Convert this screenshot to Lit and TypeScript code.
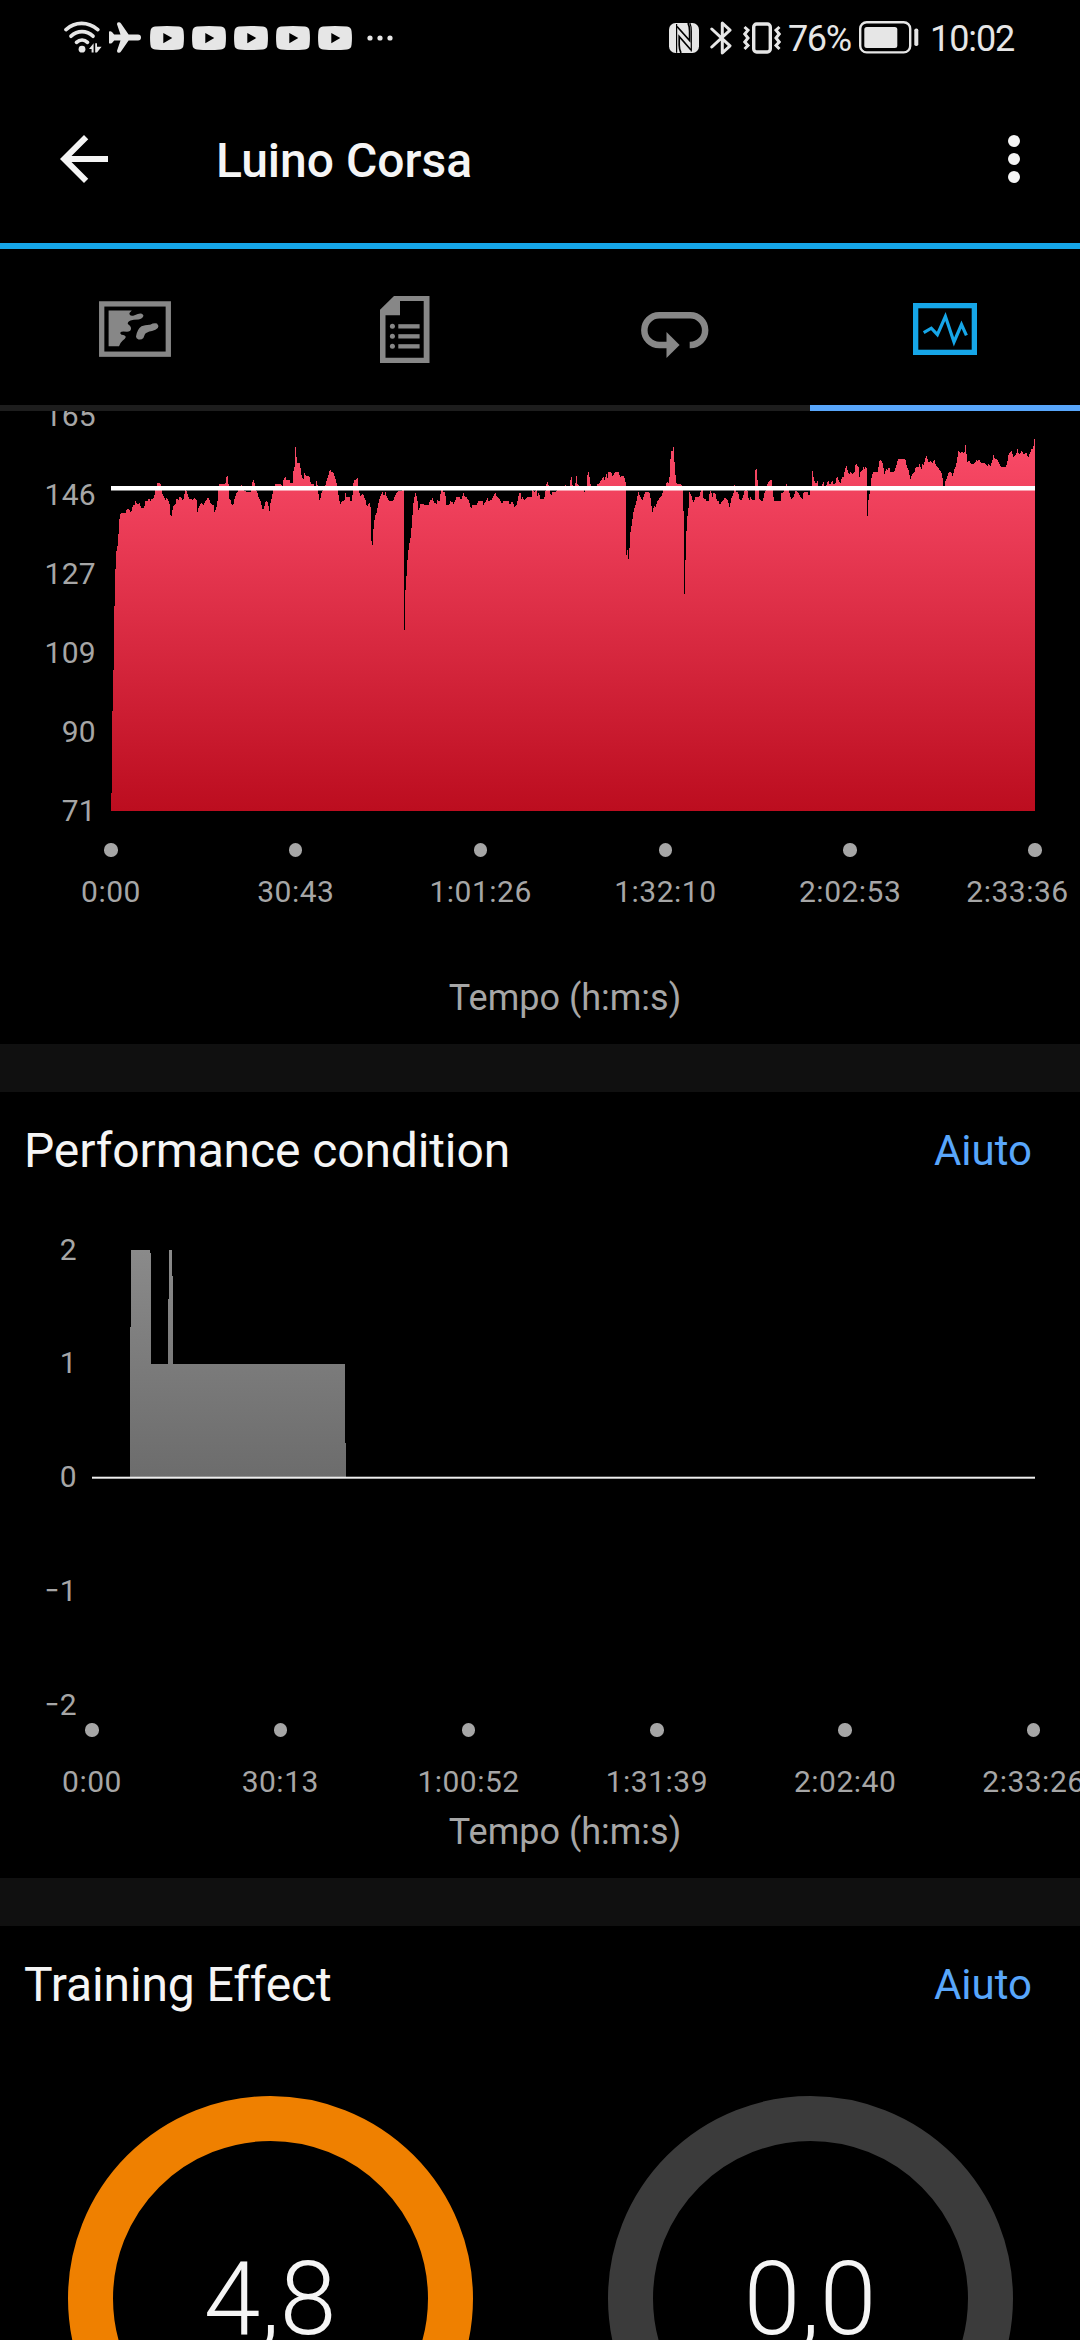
import { LitElement, html, svg, css } from "lit";
import { customElement, property } from "lit/decorators.js";

type Point = [number, number];

/* Heart-rate trace, in thirds of a pixel below the plot's upper reference.
   Each segment carries its own horizontal offset. */
const TRACE: { offset: number; points: string }[] = [
  {
    offset: 0,
    points: `333,1233 333,1180 336,1180 336,935 339,930 341,778 343,640 346,520 349,455 352,445 355,410 358,360 362,340 378,338 380,327 387,327
    391,338 395,333 399,315 404,314 406,303 410,310 414,314 418,308 424,325 432,325 436,303 444,302 447,291 451,303 455,295
    459,298 463,290 466,266 470,262 472,249 481,250 485,262 488,285 494,294 498,302 500,291 506,303 510,315 511,345 515,350
    519,320 526,314 530,294 536,302 538,291 544,292 548,300 552,294 556,264 562,280 568,298 574,296 578,302 583,294 590,302
    592,338 597,320 603,308 610,315 618,302 624,291 630,302 633,313 641,315 643,338 650,320 653,300 656,252 676,252 679,230
    683,228 686,255 688,295 692,302 695,315 700,313 705,292 709,280 714,275 716,268 722,262 724,252 728,270 740,275 752,275
    756,262 758,240 762,242 766,264 772,278 776,292 782,303 787,327 792,325 797,303 803,305 806,320 808,338 811,312 816,290
    822,264 825,252 840,252 848,258 850,240 856,228 860,240 870,240 872,250 878,250 881,205 884,200 885,140 888,140 889,168 892,188
    899,190 902,208 905,228 910,240 914,216 918,228 930,230 932,250 940,252 946,262 950,240 954,262 957,302 961,296 965,278
    970,266 976,258 980,240 986,225 990,204 994,216 1000,217 1004,228 1010,250 1014,275 1018,302 1021,314 1026,304 1034,300
    1036,278 1040,292 1050,292 1053,312 1057,292 1060,250 1064,240 1070,238 1072,230 1076,262 1080,290 1088,280 1093,292
    1098,304 1100,320 1104,315 1110,306 1112,325 1114,420 1116,435 1119,435 1119,405 1122,370 1126,345 1130,338 1134,315 1140,292
    1148,276 1152,290 1156,275 1160,290 1166,302 1180,302 1184,290 1190,278 1198,272 1204,275 1210,268 1212,270`,
  },
  {
    offset: 1200,
    points: `12,690 15,690 15,585 18,555 21,500 24,460 28,432 32,410 35,380 38,340 41,305 46,278 50,290 53,304 55,332 58,328 61,312
    70,310 73,315 87,315 90,298 93,302 97,294 103,308 110,312 112,298 118,308 121,285 124,266 130,275 136,276 138,315 148,315
    151,302 154,308 157,303 160,314 167,298 170,290 180,291 183,302 187,290 190,276 194,290 200,292 206,302 210,315 214,327
    218,315 230,314 236,303 248,304 250,315 256,306 262,294 266,303 274,300 280,290 286,276 290,290 296,294 302,304 306,312
    311,302 326,304 330,315 336,304 340,312 344,322 350,314 355,290 358,278 362,280 364,300 367,291 374,302 380,292 396,290
    397,266 402,275 406,275 410,270 413,290 416,278 422,298 429,298 434,290 437,270 439,255 442,243 447,258 449,275 454,288
    456,276 468,275 474,266 486,268 492,262 495,252 500,264 510,262 512,232 516,230 517,252 520,264 526,258 528,228 531,228 531,252
    540,258 546,264 554,276 560,264 562,228 564,216 567,216 568,228 571,252 576,264 588,262 591,252 598,250 604,240 610,228 614,240
    620,220 622,238 625,216 634,217 637,228 642,222 646,216 655,216 660,230 672,228 676,240 678,260 678,464 681,464 681,450
    684,452 684,476 687,476 687,444 689,444 691,400 695,375 699,345 703,324 708,310 712,290 715,276 720,290 728,300 732,285 736,276 748,277
    751,290 754,315 757,338 762,318 767,322 772,305 778,295 784,290 790,270 797,262 801,240 804,250 808,245 810,190 814,152
    817,158 819,140 822,140 823,178 827,230 830,252 842,252 846,258 848,258 850,330 852,345 852,582 855,582 855,480 858,480 859,400 862,352
    866,322 868,276 874,285 878,303 881,308 886,291 898,291 904,268 908,262 911,300 916,296 919,302 926,303 930,272 934,278
    937,292 941,276 946,280 950,300 956,304 960,315 966,304 976,292 984,302 989,322 994,295 1000,285 1003,252 1008,275
    1014,276 1020,302 1026,300 1032,280 1037,262 1042,270 1047,305 1052,291 1058,302 1064,300 1065,225 1067,207 1070,207 1072,235
    1076,270`,
  },
  {
    offset: 2160,
    points: `118,298 123,303 129,302 133,280 139,270 142,252 148,243 155,240 158,270 162,302 182,303 184,280 190,276 195,262
    199,252 204,264 210,285 214,299 222,288 228,270 236,280 240,290 248,298 251,276 262,276 268,290 271,262 275,260 276,213 279,213
    280,230 285,248 289,252 292,242 296,260 304,262 310,243 314,260 320,255 325,240 330,255 337,240 341,252 346,250 351,228
    356,240 361,252 366,230 370,235 374,215 379,195 382,210 387,224 392,216 396,222 404,215 406,195 409,192 416,203 418,236
    421,216 428,210 431,200 434,210 437,198 440,206 441,262 441,348 444,348 444,300 446,300 449,280 452,260 454,235 458,220 462,215
    474,216 476,195 480,178 486,184 490,200 493,224 499,208 503,212 507,200 512,216 522,216 528,200 534,178 556,178 560,196
    566,212 571,240 576,225 584,214 587,202 596,200 599,192 604,208 608,190 611,196 616,176 618,168 621,170 624,184 628,188 632,184
    637,190 643,178 648,196 656,204 660,212 667,222 669,262 674,262 676,245 681,232 686,216 694,218 698,228 702,212 707,200
    711,184 715,152 722,160 726,154 733,162 735,136 738,136 739,155 742,188 747,180 752,190 760,194 766,188 770,178 774,188 776,176
    784,190 796,190 802,200 806,190 811,198 817,184 820,165 824,176 832,178 836,188 842,200 858,200 862,190 864,166 870,158
    875,154 880,172 884,166 889,164 891,146 894,146 895,158 900,162 906,152 912,164 919,158 924,174 930,160 934,148 940,146 942,118
    945,118 945,1233`,
  },
];

const heartPoints = TRACE.flatMap(({ offset, points }) =>
  points
    .trim()
    .split(/\s+/)
    .map((pair): Point => {
      const [x, y] = pair.split(",").map(Number);
      return [(x + offset) / 3 - 111, y / 3 - 11];
    })
)
  .map(([x, y]) => `${x.toFixed(2)},${y.toFixed(2)}`)
  .join(" ");

const ICONS = {
  wifi: svg`<svg width="38" height="33" viewBox="0 0 38 33">
    <g fill="none" stroke="currentColor" stroke-width="3.7" stroke-linecap="round">
      <path d="M2 8.6C11 .4 24 .4 33.800 8.600"/><path d="M7 15.200c6.500-6 15.500-6 22 0"/><path d="M12.500 21.300c3.300-3 7.800-3 11 0"/>
    </g><circle cx="18" cy="28.200" r="3.400" fill="currentColor"/>
    <path d="M25 28l4.600-5.800v9.400h-2V28zM31.200 22.200h1.800v3.600h4.600l-4.600 5.800h-1.800z" fill="currentColor"/></svg>`,
  plane: svg`<svg width="32" height="31" viewBox="0 0 32 31"><path fill="currentColor"
    d="M0 9.500Q1.500 8.800 3 9.900L5.200 12.500H11.500L8 2.300Q7.800.3 9.600.2 11.200.1 12 1.600L19.600 12.500H29A3 3 0 0 1 29 18.500H19.600L12 29.400Q11.200 30.900 9.600 30.800 7.800 30.700 8 28.700L11.500 18.500H5.200L3 20.900Q1.500 22 0 21.300Z"/></svg>`,
  video: svg`<svg width="34" height="24" viewBox="0 0 34 24"><path fill="currentColor" fill-rule="evenodd"
    d="M5 .6Q17-.6 29 .6 33.300 1 33.600 5.500 34.300 12 33.600 18.500 33.300 23 29 23.500 17 24.500 5 23.500.7 23 .4 18.500-.3 12 .4 5.500.7 1 5 .6ZM13.300 6.900V17.200L22.300 12Z"/></svg>`,
  more: svg`<svg width="26" height="6" viewBox="0 0 26 6"><g fill="currentColor">
    <circle cx="3" cy="3" r="2.600"/><circle cx="13" cy="3" r="2.600"/><circle cx="23" cy="3" r="2.600"/></g></svg>`,
  nfc: svg`<svg width="30" height="30" viewBox="0 0 30 30"><rect width="30" height="30" rx="6.500" fill="currentColor"/>
    <path d="M7.600 1V29.800M20.800 0Q22.300 3 22.300 8V28.500" fill="none" stroke="#000" stroke-width="1.200"/>
    <path d="M8 3.500L20.600 17.500V8Q20.500 3 19 0M22 27L10.200 13.500V22Q10.300 27 12 30" fill="none" stroke="#000" stroke-width="1.700"/></svg>`,
  bluetooth: svg`<svg width="22" height="34" viewBox="0 0 22 34"><path fill="none" stroke="currentColor" stroke-width="3"
    stroke-linejoin="round" stroke-linecap="round" d="M1.800 8L20 24.800 12.300 32V2L20 9.200 1.800 26"/></svg>`,
  vibrate: svg`<svg width="38" height="32" viewBox="0 0 38 32"><g fill="none" stroke="currentColor">
    <rect x="10.700" y="2" width="16.600" height="28" rx="3" stroke-width="3.400"/>
    <path stroke-width="3" d="M1.500 5L5 8.200 1.800 12 5 16 1.800 20 5 23.500 1.500 27M36.500 5L33 8.200 36.200 12 33 16 36.200 20 33 23.500 36.500 27"/></g></svg>`,
  battery: svg`<svg width="60" height="33" viewBox="0 0 60 33"><rect x="1.200" y="1.200" width="50" height="30.200" rx="6.500"
    fill="none" stroke="currentColor" stroke-width="2.400"/><rect x="5.300" y="6" width="33" height="21" rx="2.500" fill="currentColor"/>
    <rect x="55.300" y="7.500" width="4" height="17.500" rx="1.800" fill="currentColor"/></svg>`,
  back: svg`<svg width="72" height="72" viewBox="0 0 24 24"><path fill="currentColor"
    d="M20 11H7.830l5.590-5.590L12 4l-8 8 8 8 1.410-1.410L7.830 13H20v-2z"/></svg>`,
  menu: svg`<svg width="72" height="72" viewBox="0 0 24 24"><g fill="currentColor">
    <circle cx="12" cy="6" r="2"/><circle cx="12" cy="12" r="2"/><circle cx="12" cy="18" r="2"/></g></svg>`,
  map: svg`<svg width="72" height="56" viewBox="0 0 72 56"><rect x="2.700" y="2.900" width="66.600" height="50.300" fill="none"
    stroke="currentColor" stroke-width="5.300"/><path fill="currentColor"
    d="M9.600 9.400H32.800Q30 11.500 30.600 13.500 32 15.600 35.500 14.200 39.500 12.400 41.500 12.500 44.500 13 44.400 15 43.500 17.600 39.500 18.600 34 18.800 31.500 19.400 28.400 20.800 28.800 23 32.500 25.500 32 28 31.500 30.800 28 30.800 23 30 21.700 31 20.500 32.600 22.500 33.700 26.500 34 26.800 36 26.500 37.800 23.500 39.800 21 42 20 45.300H9.600Z
    M37 35.500Q38 28.500 42.500 25.300 46 23.700 51 23.800 55 21.700 58 22.600 60 24.500 58.800 27 57 29 53 30 47 31 45.800 33.500L44.400 37Q42.500 39 39.500 38.400 37 37.500 37 35.500Z"/></svg>`,
  details: svg`<svg width="50" height="67" viewBox="0 0 50 67"><path fill="currentColor" fill-rule="evenodd"
    d="M14 0H49.500V67H0V13.700ZM20 5V19.300H5.500V61.700H43.700V5Z"/><g fill="currentColor">
    <circle cx="12.400" cy="30.300" r="2.500"/><circle cx="12.400" cy="40.300" r="2.500"/><circle cx="12.400" cy="50.300" r="2.500"/>
    <rect x="18.300" y="28.200" width="21.300" height="4.300"/><rect x="18.300" y="38.200" width="21.300" height="4.300"/><rect x="18.300" y="48.200" width="21.300" height="4.300"/></g></svg>`,
  laps: svg`<svg width="68" height="58" viewBox="0 -12 68 58"><path fill="none" stroke="currentColor" stroke-width="6.500"
    d="M48.700 33H49.300A14.850 14.850 0 0 0 49.300 3.300H18.200A14.850 14.850 0 0 0 18.200 33H26"/>
    <path fill="currentColor" d="M25.500 20L38.600 33 25.500 46Z"/></svg>`,
  stats: svg`<svg width="64" height="52" viewBox="0 0 64 52"><g fill="none" stroke="currentColor">
    <rect x="2.650" y="2.650" width="58.700" height="46.700" stroke-width="5.300"/>
    <path stroke-width="3.200" d="M10.700 29.700L18.300 25.200 24.400 31.700 32.400 13.500 41 39 48.500 21.500 53.400 32.300"/></g></svg>`,
};

@customElement("status-bar")
class StatusBar extends LitElement {
  static styles = css`
    :host { display: flex; align-items: center; height: 75px; padding: 0 66px 0 64px; color: #e6e6e6; font-size: 36px; }
    svg { display: block; flex: none; }
    .left, .right, .videos { display: flex; align-items: center; }
    .left { flex: 1; }
    .plane { margin-left: 7px; }
    .videos { gap: 8px; margin: 1px 0 0 9px; }
    .more { margin-left: 15px; }
    .bluetooth { margin-left: 10.500px; }
    .vibrate { margin-left: 11px; }
    .level { margin-left: 7.500px; width: 65px; letter-spacing: -1.400px; white-space: nowrap; }
    .battery { margin-left: 6px; }
    .clock { margin-left: 11px; width: 84px; white-space: nowrap; letter-spacing: -1.100px; }
    .level, .clock { position: relative; top: 1.500px; line-height: 42px; }
  `;
  render() {
    return html`
      <div class="left">
        ${ICONS.wifi}<span class="plane">${ICONS.plane}</span>
        <span class="videos">${Array.from({ length: 5 }, () => html`<span>${ICONS.video}</span>`)}</span>
        <span class="more">${ICONS.more}</span>
      </div>
      <div class="right">
        ${ICONS.nfc}<span class="bluetooth">${ICONS.bluetooth}</span><span class="vibrate">${ICONS.vibrate}</span>
        <span class="level">76%</span><span class="battery">${ICONS.battery}</span><span class="clock">10:02</span>
      </div>
    `;
  }
}

@customElement("time-axis")
class TimeAxis extends LitElement {
  @property({ type: Array }) labels: string[] = [];
  static styles = css`
    :host { display: grid; grid-template-columns: repeat(6, var(--step)); }
    .tick { display: flex; flex-direction: column; align-items: center; gap: var(--label-gap); }
    .dot { width: 13.400px; height: 13.400px; margin: -0.200px 0; border-radius: 50%; background: #a6a6a6; }
    .label { line-height: 36px; white-space: nowrap; letter-spacing: 0.500px; }
    .tick:last-child .label { transform: translateX(var(--last-shift, 0)); }
  `;
  render() {
    return this.labels.map(
      (label) => html`<div class="tick"><span class="dot"></span><span class="label">${label}</span></div>`
    );
  }
}

@customElement("section-header")
class SectionHeader extends LitElement {
  @property() heading = "";
  static styles = css`
    :host { display: flex; align-items: center; justify-content: space-between; height: 116px; padding: 0 48px 0 24px; }
    .heading { font-size: 48px; color: #f5f5f5; letter-spacing: -0.120px; }
    .help { font-size: 42px; color: #58a6fb; }
  `;
  render() {
    return html`<span class="heading">${this.heading}</span><span class="help">Aiuto</span>`;
  }
}

@customElement("app-root")
class AppRoot extends LitElement {
  static styles = css`
    :host {
      display: flex; flex-direction: column; width: 1080px; height: 2340px; overflow: hidden;
      background: #000; color: #a6a6a6; font-family: Roboto, "Liberation Sans", sans-serif; font-size: 30px;
    }
    svg { display: block; }
    status-bar, .app-bar, .tabs, section { flex: none; }
    .app-bar { display: flex; align-items: center; height: 168px; padding: 0 30px 0 48px; box-sizing: border-box; color: #f5f5f5; }
    .title { flex: 1; margin-left: 96px; padding-top: 2px; font-size: 48px; font-weight: 500; }
    .tabs { display: grid; grid-template-columns: repeat(4, 1fr); border-top: 6px solid #16a6e8; height: 162px; }
    .tab {
      display: flex; align-items: center; justify-content: center; padding-top: 4px;
      border-bottom: 6px solid #1d1d1d; color: #878787;
    }
    .tab.active { color: #16a6e8; border-bottom-color: #58a6fb; }
    section { overflow: hidden; }
    .divider { flex: none; height: 48px; background: #101010; }
    .heart { height: 633px; }
    .performance { height: 786px; }
    .chart { display: grid; column-gap: 15px; }
    .heart .chart { grid-template-columns: 96px 924px; height: 400px; }
    .performance .chart { grid-template-columns: 77px 943px; height: 504px; }
    .scale { display: flex; flex-direction: column; text-align: right; letter-spacing: 0.300px; }
    .heart .scale { margin-top: -35.500px; line-height: 79px; }
    .performance .scale { margin-top: -15.500px; line-height: 113.800px; }
    .minus { display: inline-block; transform: scaleX(0.850); transform-origin: right; }
    .heart time-axis { --step: 184.800px; --label-gap: 17.500px; --last-shift: -17.500px; margin: 32.500px 0 0 18.600px; }
    .performance time-axis { --step: 188.300px; --label-gap: 27.500px; margin: 11.500px 0 0 -2.200px; }
    .caption { padding-left: 50px; text-align: center; font-size: 36px; line-height: 42px; }
    .heart .caption { margin-top: 67px; }
    .performance .caption { margin-top: 11px; }
    .gauges { display: grid; grid-template-columns: 1fr 1fr; justify-items: center; padding-top: 54px; }
    .gauge {
      display: flex; align-items: center; justify-content: center; box-sizing: border-box; width: 405px; height: 405px;
      border: 45px solid #3b3b3b; border-radius: 50%; color: #f5f5f5; font-size: 102px; font-weight: 300;
    }
    .gauge.aerobic { border-color: #ef8000; }
  `;

  private tabs = [
    { icon: ICONS.map, active: false },
    { icon: ICONS.details, active: false },
    { icon: ICONS.laps, active: false },
    { icon: ICONS.stats, active: true },
  ];

  private scaleLabel(value: number) {
    return value < 0 ? html`<span><span class="minus">−</span>${-value}</span>` : html`<span>${value}</span>`;
  }

  render() {
    return html`
      <status-bar></status-bar>
      <header class="app-bar">${ICONS.back}<span class="title">Luino Corsa</span>${ICONS.menu}</header>
      <nav class="tabs">
        ${this.tabs.map((tab) => html`<div class="tab ${tab.active ? "active" : ""}">${tab.icon}</div>`)}
      </nav>

      <section class="heart">
        <div class="chart">
          <div class="scale">${[165, 146, 127, 109, 90, 71].map((v) => this.scaleLabel(v))}</div>
          <svg width="924" height="400" viewBox="0 0 924 400">
            <defs>
              <linearGradient id="heart-fill" gradientUnits="userSpaceOnUse" x1="0" y1="4" x2="0" y2="400">
                <stop offset="0" stop-color="#fe4f6d" /><stop offset="1" stop-color="#bc0d1f" />
              </linearGradient>
            </defs>
            <polygon points=${heartPoints} fill="url(#heart-fill)" shape-rendering="crispEdges" />
            <rect x="0" y="75" width="924" height="4.500" fill="#fff" />
          </svg>
        </div>
        <time-axis .labels=${["0:00", "30:43", "1:01:26", "1:32:10", "2:02:53", "2:33:36"]}></time-axis>
        <div class="caption">Tempo (h:m:s)</div>
      </section>
      <div class="divider"></div>

      <section class="performance">
        <section-header heading="Performance condition"></section-header>
        <div class="chart">
          <div class="scale">${[2, 1, 0, -1, -2].map((v) => this.scaleLabel(v))}</div>
          <svg width="943" height="504" viewBox="0 0 943 504">
            <defs>
              <linearGradient id="performance-fill" gradientUnits="userSpaceOnUse" x1="0" y1="42" x2="0" y2="270">
                <stop offset="0" stop-color="#8a8a8a" /><stop offset="1" stop-color="#6c6c6c" />
              </linearGradient>
            </defs>
            <path fill="url(#performance-fill)" shape-rendering="crispEdges"
              d="M38 270V119H39V42H58V45H59V156H76V91H77V42H80V68H81V156H253V235H254V270Z" />
            <rect x="0" y="268.700" width="943" height="2" fill="#eee" />
          </svg>
        </div>
        <time-axis .labels=${["0:00", "30:13", "1:00:52", "1:31:39", "2:02:40", "2:33:26"]}></time-axis>
        <div class="caption">Tempo (h:m:s)</div>
      </section>
      <div class="divider"></div>

      <section class="training">
        <section-header heading="Training Effect"></section-header>
        <div class="gauges">
          <div class="gauge aerobic">4,8</div>
          <div class="gauge">0,0</div>
        </div>
      </section>
    `;
  }
}
